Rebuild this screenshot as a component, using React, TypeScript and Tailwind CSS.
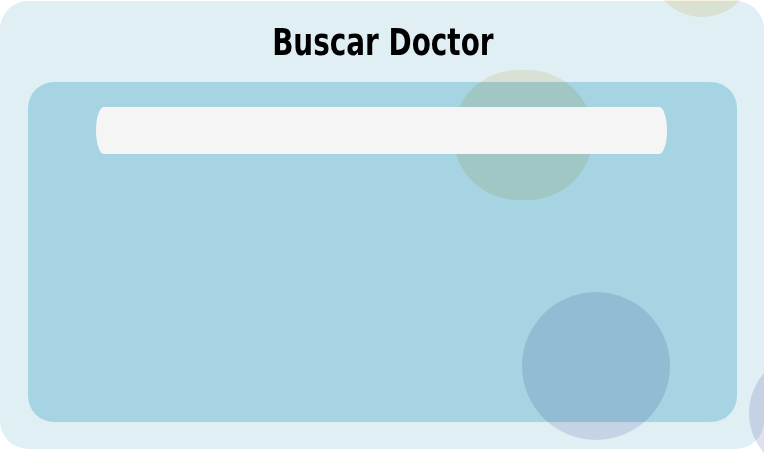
import React from 'react';

// Soft decorative bubbles that float over the card
const bubbles = [
  { cls: 'left-[650px] top-[-87px] w-[104px] h-[104px] bg-[#f7f1dd]' },
  { cls: 'left-[453px] top-[70px] w-[140px] h-[130px] bg-[#f6f0de]' },
  { cls: 'left-[522px] top-[292px] w-[148px] h-[148px] bg-[#e1e3f0]' },
  { cls: 'left-[749px] top-[352px] w-[122px] h-[122px] bg-[#e2e0ee]' },
];

export default function App() {
  return (
    <div className="relative isolate w-[764px] h-[453px] overflow-hidden bg-white font-['Liberation_Sans_Narrow','DejaVu_Sans_Condensed',sans-serif]">
      <div className="mt-[1px] h-[448px] w-[764px] rounded-[28px] bg-[#e0eff4] pl-[28px] pr-[27px] flex flex-col">
        <h1 className="mt-[22px] h-[38px] text-[38px] leading-none font-bold text-black text-center">
          <span className="inline-block scale-x-[0.815]">Buscar Doctor</span>
        </h1>
        <div className="mt-[21px] h-[340px] rounded-[26px] bg-[#a6d4e2] pt-[25px]">
          <div className="relative z-10 ml-[68px] w-[571px] h-[47px] rounded-[8px/24px] bg-[#f5f5f5]" />
        </div>
      </div>

      {bubbles.map((b, i) => (
        <div key={i} className={`absolute rounded-full mix-blend-multiply ${b.cls}`} />
      ))}
    </div>
  );
}
